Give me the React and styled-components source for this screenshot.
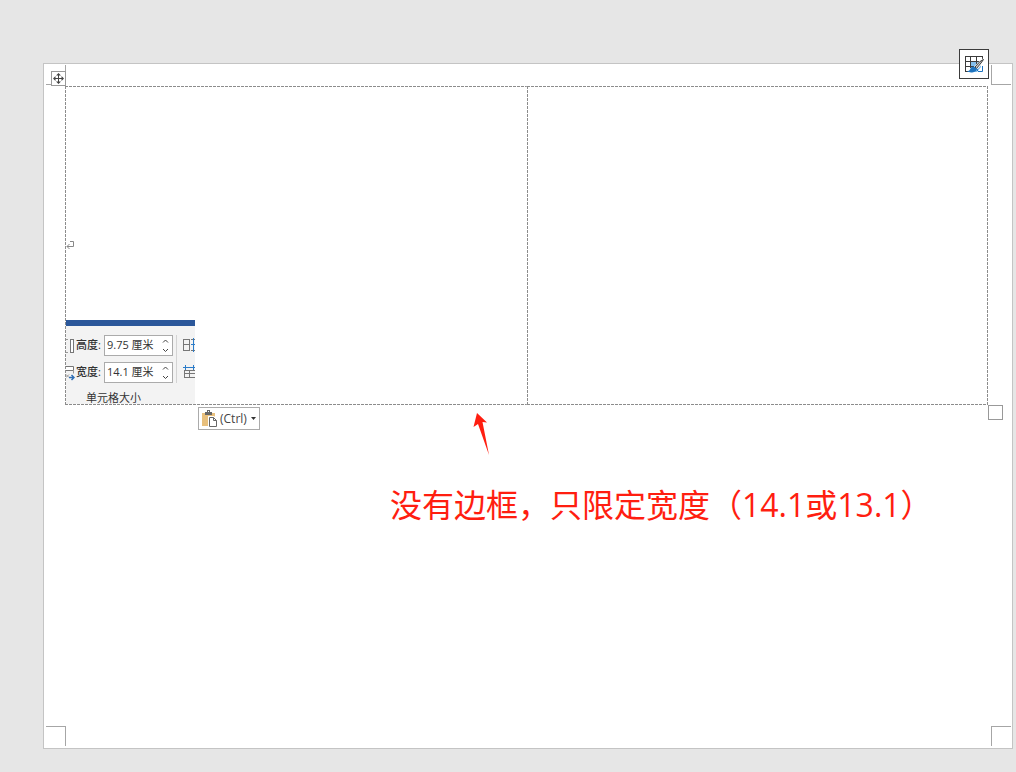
import { useState } from "react";
import styled, { createGlobalStyle, css } from "styled-components";

const GlobalStyle = createGlobalStyle`
  * {
    box-sizing: border-box;
  }
  body {
    margin: 0;
    background: #e6e6e6;
    font-family: "Open Sans", "Noto Sans CJK SC", sans-serif;
  }
  button, input {
    font-family: inherit;
  }
`;

const HeightIcon = () => (
  <svg width="9" height="16" viewBox="0 0 9 16" fill="none" shapeRendering="crispEdges">
    <path d="M0 1.5h2M0 14.5h2" stroke="#999" />
    <path d="M4.5 1.5h3v13h-3z" stroke="#777" fill="#fff" />
  </svg>
);

const WidthIcon = () => (
  <svg width="9" height="16" viewBox="0 0 9 16" fill="none">
    <path d="M0 1.5h7.5v4H0" stroke="#777" fill="#fff" />
    <path d="M7.5 5.5v3M0 9.5l3 3M3 9.5l-3 3" stroke="#999" />
    <path d="M3 12.5h5M5.5 10L8 12.5 5.5 15" stroke="#2f6fb5" strokeWidth="1.5" />
  </svg>
);

const RowsIcon = () => (
  <svg width="13" height="14" viewBox="0 0 13 14" fill="none" shapeRendering="crispEdges">
    <path d="M0.5 1.5h6v11h-6zM0.5 6.5h6" stroke="#777" />
    <path d="M8 1.5h5M8 12.5h5" stroke="#777" />
    <path d="M10.5 0v14M8 6.5h5" stroke="#2b7cc9" />
  </svg>
);

const ColumnsIcon = () => (
  <svg width="13" height="14" viewBox="0 0 13 14" fill="none" shapeRendering="crispEdges">
    <path d="M1.5 5.5h11v7h-11zM1.5 8.5h11M6.5 5.5v7" stroke="#777" />
    <path d="M0 2.5h13M2.5 0v5M10.5 0v5" stroke="#2b7cc9" />
  </svg>
);

const MoveIcon = () => (
  <svg width="13" height="13" viewBox="0 0 13 13">
    <path d="M6.5 2v9M2 6.5h9" stroke="#444" />
    <path d="M6.5 1L9 3.5H4zM6.5 12L4 9.5h5zM1 6.5L3.5 4v5zM12 6.5L9.5 9V4z" fill="#444" />
  </svg>
);

const TableStyleIcon = () => (
  <svg width="20" height="20" viewBox="0 0 20 20" fill="none">
    <path d="M7 7h10v6l-4 5H7z" fill="#83beec" />
    <path
      d="M1.5 2.5h17M1.5 7.5h14M1.5 12.5h8M1.5 17.5h3M1.5 2v16M6.500 2v12M12.5 2v8M18.5 2v4"
      stroke="#3b3b3b"
      shapeRendering="crispEdges"
    />
    <path d="M18.500 12v5.500H14M13.500 14v3" stroke="#1e73be" />
    <path d="M19.500 6L11.500 14" stroke="#fff" strokeWidth="4" />
    <path d="M19.500 5.500l-3.500 2-5 5.500 1.500 1.500 4.500-5.500z" fill="#c8c8c8" stroke="#3b3b3b" />
    <path d="M10 12.500c-2.500 0-3.500 1.500-4 3-.4 1.200-1.800 1.700-3 2 3 1.700 9.500 1.200 10-2.500z" fill="#1e73be" />
  </svg>
);

const PasteIcon = () => (
  <svg width="16" height="17" viewBox="0 0 16 17" fill="none">
    <path d="M0 3h13v13H0z" fill="#e8c07d" />
    <path d="M3 2h2V0h3v2h2v3H3z" fill="#666" />
    <path d="M6 1.5h1" stroke="#fff" />
    <path d="M6 6h6l4 4v7H6z" fill="#fff" />
    <path d="M7.5 7.5h4l3 3v6h-7z" stroke="#666" />
    <path d="M11.5 7.5v3h3" stroke="#666" />
  </svg>
);

const SizeField = ({ id, label, icon, initial }) => {
  const [value, setValue] = useState(initial);

  return (
    <FieldRow>
      {icon}
      <FieldLabel htmlFor={id}>{label}</FieldLabel>
      <SpinBox>
        <SpinInput id={id} value={value} onChange={(e) => setValue(e.target.value)} />
        <svg width="7" height="15" viewBox="0 0 7 15" fill="none" stroke="#444">
          <path d="M1 4.5L3.5 2 6 4.5M1 11l2.5 2.5L6 11" />
        </svg>
      </SpinBox>
    </FieldRow>
  );
};

const App = () => {
  return (
    <Workspace>
      <GlobalStyle />
      <Sheet>
        <CropMark $top $left />
        <CropMark $top />
        <CropMark $left />
        <CropMark />
        <TableArea>
          <MoveHandle type="button" aria-label="移动表格">
            <MoveIcon />
          </MoveHandle>
          <StyleButton type="button" aria-label="表格样式">
            <TableStyleIcon />
          </StyleButton>
          <DocTable>
            <tbody>
              <tr>
                <Cell>
                  <ParagraphMark width="9" height="9" viewBox="0 0 9 9" fill="none">
                    <path d="M4 0.5h3.5v5H1M3.5 3L1 5.5 3.5 8" stroke="#888" />
                  </ParagraphMark>
                  <Ribbon>
                    <RibbonBody>
                      <Fields>
                        <SizeField id="height" label="高度:" icon={<HeightIcon />} initial="9.75 厘米" />
                        <SizeField id="width" label="宽度:" icon={<WidthIcon />} initial="14.1 厘米" />
                      </Fields>
                      <Distribute>
                        <RowsIcon />
                        <ColumnsIcon />
                      </Distribute>
                    </RibbonBody>
                    <GroupTitle>单元格大小</GroupTitle>
                  </Ribbon>
                </Cell>
                <Cell $last />
              </tr>
            </tbody>
          </DocTable>
          <ResizeHandle />
        </TableArea>
        <BelowTable>
          <PasteButton type="button">
            <PasteIcon />
            (Ctrl)
            <Caret width="5" height="3" viewBox="0 0 5 3">
              <path d="M0 0h5L2.5 3z" fill="#333" />
            </Caret>
          </PasteButton>
          <Arrow width="18" height="43" viewBox="0 0 18 43">
            <path d="M4 0L14 9.5l-4.5-.5L16 42 5 11 .5 14z" fill="#ff1e10" />
          </Arrow>
        </BelowTable>
        <Note>没有边框，只限定宽度（14.1或13.1）</Note>
      </Sheet>
    </Workspace>
  );
};

const Workspace = styled.main`
  padding: 63px 3px 23px 43px;
`;

const Sheet = styled.section`
  position: relative;
  min-height: calc(100vh - 86px);
  padding: 22px 24px 22px 21px;
  background: #fff;
  border: 1px solid #c4c4c4;
`;

/* margin corner, open towards the outside of the sheet */
const CropMark = styled.span`
  position: absolute;
  width: 20px;
  height: 20px;
  border: 0 solid #a6a6a6;
  ${({ $top }) =>
    $top
      ? css`
          top: 1px;
          border-bottom-width: 1px;
        `
      : css`
          bottom: 2px;
          border-top-width: 1px;
        `}
  ${({ $left }) =>
    $left
      ? css`
          left: 2px;
          border-right-width: 1px;
        `
      : css`
          right: 1px;
          border-left-width: 1px;
        `}
`;

const TableArea = styled.div`
  position: relative;
`;

const DocTable = styled.table`
  width: 100%;
  table-layout: fixed;
  border-spacing: 0;
`;

const dashX = "repeating-linear-gradient(90deg, #8c8c8c 0 3px, transparent 3px 4px)";
const dashY = "repeating-linear-gradient(180deg, #8c8c8c 0 3px, transparent 3px 4px)";

const Cell = styled.td`
  height: 319px;
  padding: 0 0 1px 1px;
  vertical-align: bottom;
  background:
    ${dashX} top / 100% 1px no-repeat,
    ${dashX} bottom / 100% 1px no-repeat,
    ${dashY} left / 1px 100% no-repeat
    ${({ $last }) => $last && `, ${dashY} right / 1px 100% no-repeat`};
`;

const ParagraphMark = styled.svg`
  display: block;
  margin-bottom: 70px;
`;

const Ribbon = styled.div`
  width: 129px;
  height: 84px;
  overflow: hidden;
  background: #f3f3f3;
  border-top: 6px solid #2b579a;
  color: #333;
  font-size: 11px;
`;

const RibbonBody = styled.div`
  display: flex;
  padding-top: 9px;
`;

const Fields = styled.div`
  display: flex;
  flex-direction: column;
  gap: 6px;
  padding-right: 3px;
  border-right: 1px solid #d4d4d4;
`;

const FieldRow = styled.div`
  display: flex;
  align-items: center;
  height: 21px;
`;

const FieldLabel = styled.label`
  width: 29px;
  padding: 0 0 3px 1px;
  font-weight: 500;
  white-space: nowrap;
`;

const SpinBox = styled.div`
  display: flex;
  align-items: center;
  width: 69px;
  height: 21px;
  padding: 0 3px 0 2px;
  background: #fff;
  border: 1px solid #ababab;
`;

const SpinInput = styled.input`
  flex: 1;
  min-width: 0;
  padding: 0 0 3px;
  border: 0;
  outline: 0;
  background: none;
  color: #333;
  font-size: 11px;
`;

const Distribute = styled.div`
  display: flex;
  flex-direction: column;
  gap: 13px;
  padding: 3px 0 0 6px;
`;

const GroupTitle = styled.div`
  padding-left: 20px;
  margin-top: 6px;
  line-height: 18px;
`;

const MoveHandle = styled.button`
  position: absolute;
  top: -15px;
  left: -14px;
  display: flex;
  width: 15px;
  height: 15px;
  padding: 0;
  background: #fff;
  border: 1px solid #999;
`;

const StyleButton = styled.button`
  position: absolute;
  top: -37px;
  right: -1px;
  z-index: 1;
  display: flex;
  align-items: center;
  justify-content: center;
  width: 30px;
  height: 30px;
  padding: 0;
  background: #fff;
  border: 1px solid #3b3b3b;
`;

const ResizeHandle = styled.span`
  position: absolute;
  right: -15px;
  bottom: -15px;
  width: 15px;
  height: 15px;
  background: #fff;
  border: 1px solid #999;
`;

const BelowTable = styled.div`
  display: flex;
  align-items: flex-start;
  padding-top: 2px;
`;

const PasteButton = styled.button`
  display: flex;
  align-items: center;
  width: 62px;
  height: 23px;
  padding: 0 3px;
  margin-left: 133px;
  gap: 2px;
  background: #fff;
  border: 1px solid #ababab;
  color: #444;
  font-size: 12px;
`;

const Caret = styled.svg`
  flex-shrink: 0;
  margin-left: auto;
`;

const Arrow = styled.svg`
  margin: 6px 0 0 213px;
`;

const Note = styled.p`
  margin: 25px 0 0 325px;
  color: #ff1e10;
  font-size: 32px;
  line-height: 48px;
  white-space: nowrap;
`;

export default App;
